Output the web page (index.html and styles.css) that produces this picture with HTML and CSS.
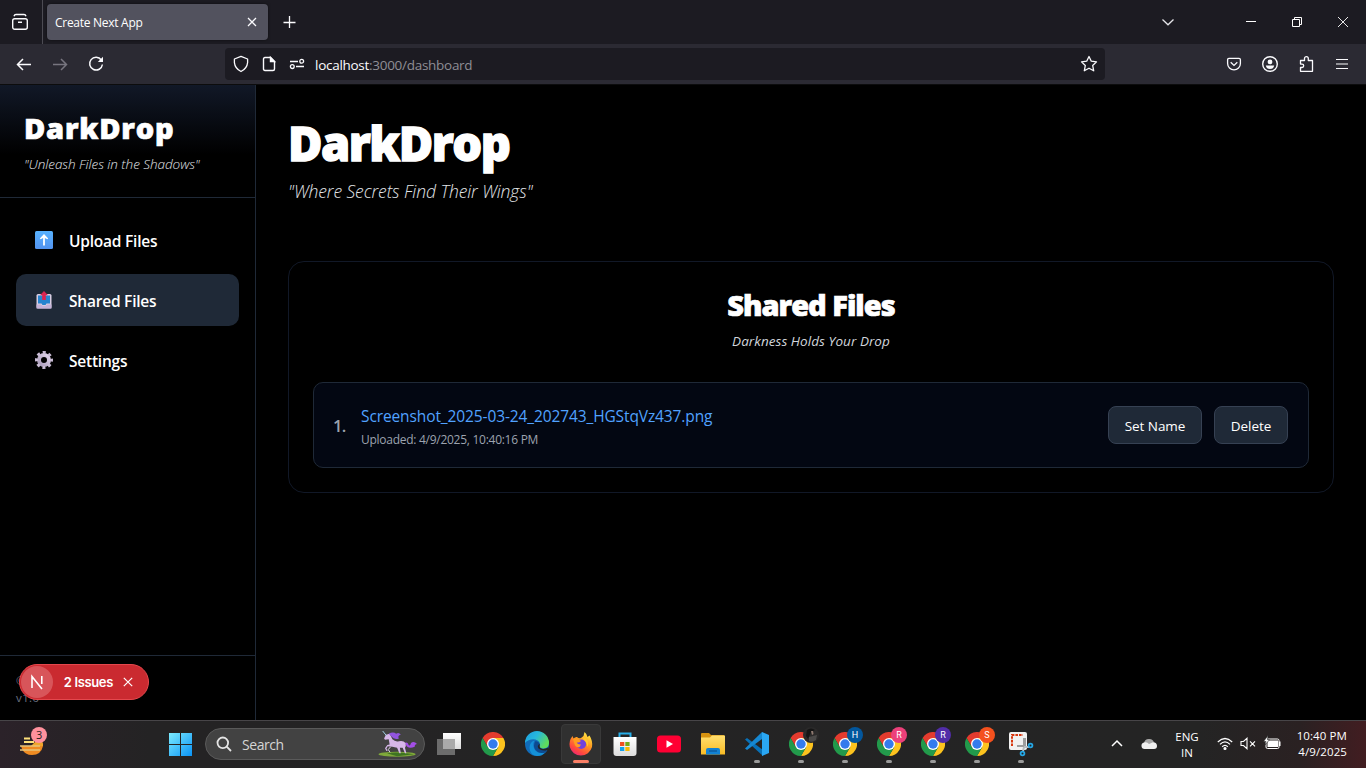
FILE: index.html
```html
<!DOCTYPE html>
<html lang="en">
<head>
<meta charset="utf-8">
<title>Create Next App</title>
<link rel="stylesheet" href="styles.css">
</head>
<body>
<svg width="0" height="0" class="defs">
  <defs>
    <linearGradient id="gw" x1="0" y1="0" x2="1" y2="1"><stop offset="0" stop-color="#7cebff"/><stop offset="1" stop-color="#0a93f5"/></linearGradient>
    <linearGradient id="ge" x1="0" y1="0" x2="1" y2=".5"><stop offset="0" stop-color="#1b9de2"/><stop offset=".5" stop-color="#27b8dc"/><stop offset="1" stop-color="#5fdc5b"/></linearGradient>
    <linearGradient id="gf" x1=".8" y1="0" x2=".2" y2="1"><stop offset="0" stop-color="#fff04a"/><stop offset=".4" stop-color="#ff9a1f"/><stop offset=".75" stop-color="#ff4a3e"/><stop offset="1" stop-color="#e8207a"/></linearGradient>
    <linearGradient id="gs" x1="0" y1="0" x2="0" y2="1"><stop offset="0" stop-color="#ffffff"/><stop offset="1" stop-color="#dcdcdc"/></linearGradient>
    <linearGradient id="gd" x1="0" y1="0" x2="0" y2="1"><stop offset="0" stop-color="#ffdf70"/><stop offset="1" stop-color="#f9bb24"/></linearGradient>
    <linearGradient id="gu" x1="0" y1="0" x2="0" y2="1"><stop offset="0" stop-color="#58b2ff"/><stop offset="1" stop-color="#5292ee"/></linearGradient>
    <linearGradient id="gg" x1="1" y1="0" x2="0" y2="1"><stop offset="0" stop-color="#e2d5ec"/><stop offset="1" stop-color="#a99bb9"/></linearGradient>
    <symbol id="chrome" viewBox="0 0 24 24">
      <path fill="#e33b2e" d="M12 6H22.4A12 12 0 0 0 1.6 6L6.8 15L12 12Z"/>
      <path fill="#fcc31e" d="M22.4 6A12 12 0 0 1 12 24L17.2 15L12 12V6Z"/>
      <path fill="#229a4b" d="M12 24A12 12 0 0 1 1.6 6L6.8 15L12 12L17.2 15Z"/>
      <circle cx="12" cy="12" r="6" fill="#fff"/><circle cx="12" cy="12" r="4.7" fill="#347bed"/>
    </symbol>
  </defs>
</svg>
<div class="screen">
  <header class="tabstrip">
    <div class="recent"><svg width="18" height="18" viewBox="0 0 18 18" fill="none" stroke="#fbfbfe" stroke-width="1.4"><rect x="1.7" y="5.7" width="14.6" height="10.6" rx="2"/><path d="M3 3.3Q3.5 1.5 5 1.5H13Q14.500 1.500 15 3.300M7 9.300H11"/></svg></div>
    <div class="tab"><span class="tab-title">Create Next App</span><svg width="10" height="10" viewBox="0 0 10 10" stroke="#fbfbfe" stroke-width="1.300"><path d="M1 1L9 9M9 1L1 9"/></svg></div>
    <svg class="plus" width="14" height="14" viewBox="0 0 14 14" stroke="#fbfbfe" stroke-width="1.300"><path d="M6.500 1V13M.5 7.500H12.500"/></svg>
    <div class="window-controls">
      <svg width="14" height="14" viewBox="0 0 14 14" fill="none" stroke="#e4e4e8" stroke-width="1.300"><path d="M1.500 4.500L7 9.800L12.500 4.500"/></svg>
      <svg width="12" height="12" viewBox="0 0 12 12" stroke="#fff"><path d="M1 5.500H11"/></svg>
      <svg width="12" height="12" viewBox="0 0 12 12" fill="none" stroke="#fff"><path d="M1.500 3.500H8.500V10.500H1.500ZM3.500 3.500V1.500H10.500V8.500H8.500"/></svg>
      <svg width="12" height="12" viewBox="0 0 12 12" stroke="#fff" stroke-width=".9"><path d="M1 1L11 11M11 1L1 11"/></svg>
    </div>
  </header>
  <div class="toolbar">
    <div class="nav-buttons">
      <svg width="16" height="16" viewBox="0 0 16 16" fill="none" stroke="#fbfbfe" stroke-width="1.500"><path d="M15 8.500H1.500M7 3L1.500 8.500L7 14"/></svg>
      <svg width="16" height="16" viewBox="0 0 16 16" fill="none" stroke="#77757f" stroke-width="1.500"><path d="M1 8.500H14.500M9 3L14.500 8.500L9 14"/></svg>
      <svg width="16" height="16" viewBox="0 0 16 16" fill="none" stroke="#fbfbfe" stroke-width="1.500"><path d="M13.300 4A6.400 6.400 0 1 0 14.400 8.500"/><path d="M15 .8V6H9.800Z" fill="#fbfbfe" stroke="none"/></svg>
    </div>
    <div class="urlbar">
      <svg width="16" height="18" viewBox="0 0 16 18" fill="none" stroke="#fbfbfe" stroke-width="1.300"><path d="M8 1.300L14.600 4V7.600Q14 13.500 8 16.500Q2 13.500 1.400 7.600V4Z" stroke-linejoin="round"/></svg>
      <svg width="14" height="16" viewBox="0 0 14 16" fill="none" stroke="#fbfbfe" stroke-width="1.400"><path d="M3 1.500H8.500L12.500 5.500V13Q12.500 14.500 11 14.500H3Q1.500 14.500 1.500 13V3Q1.500 1.500 3 1.500Z"/><path d="M8.500 1.500V5.500H12.500Z" fill="#fbfbfe"/></svg>
      <svg width="16" height="14" viewBox="0 0 16 14" fill="none" stroke="#fbfbfe" stroke-width="1.300"><path d="M1 4.500H9M7 9.500H15"/><circle cx="12.700" cy="4.300" r="1.900"/><circle cx="3.300" cy="9.600" r="1.900"/></svg>
      <span class="url"><b>localhost</b>:3000/dashboard</span>
      <svg width="18" height="18" viewBox="0 0 18 18" fill="none" stroke="#fbfbfe" stroke-width="1.300" stroke-linejoin="round"><path d="M9 1.500L11.300 6.200L16.500 6.900L12.700 10.500L13.700 15.800L9 13.200L4.300 15.800L5.300 10.500L1.500 6.900L6.700 6.200Z"/></svg>
    </div>
    <div class="tools">
      <svg width="16" height="16" viewBox="0 0 16 16" fill="none" stroke="#fbfbfe" stroke-width="1.300"><path d="M3 2.300H13Q14.400 2.300 14.400 3.700V7.500A6.400 6.400 0 0 1 1.600 7.500V3.700Q1.600 2.300 3 2.300Z"/><path d="M4.700 6.300L8 9.400L11.300 6.300"/></svg>
      <svg width="18" height="18" viewBox="0 0 18 18"><circle cx="9" cy="9" r="7.300" fill="none" stroke="#fbfbfe" stroke-width="1.400"/><circle cx="9" cy="6.900" r="2.400" fill="#fbfbfe"/><path d="M4.800 10.500H13.200Q12.500 14 9 14Q5.500 14 4.800 10.500Z" fill="#fbfbfe"/></svg>
      <svg width="18" height="18" viewBox="0 0 18 18" fill="none" stroke="#fbfbfe" stroke-width="1.300" stroke-linejoin="round"><path d="M2.500 8.500V5.500H6.500V3.500A1.900 1.900 0 0 1 10.300 3.500V5.500H14.500V16.300H2.500V12.500H4A1.700 1.700 0 0 0 4 9.100H2.500Z"/></svg>
      <svg width="14" height="14" viewBox="0 0 14 14" stroke="#fbfbfe" stroke-width="1.200"><path d="M1 2.500H13M1 7H13M1 11.500H13"/></svg>
    </div>
  </div>
  <div class="app">
    <aside class="sidebar">
      <div class="brand"><h2 class="brand-name">DarkDrop</h2><p class="brand-tag">"Unleash Files in the Shadows"</p></div>
      <nav class="menu">
        <a class="menu-item"><svg width="18" height="18" viewBox="0 0 18 18"><rect width="18" height="18" rx="1.500" fill="url(#gu)"/><path d="M9 3L13.200 7.500L12.300 8.300L9.900 7V14.500H8.100V7L5.700 8.300L4.800 7.500Z" fill="#fff"/></svg><span>Upload Files</span></a>
        <a class="menu-item active"><svg width="18" height="18" viewBox="0 0 18 18"><rect x="1.500" y="3" width="15" height="14.500" rx="1.500" fill="#d8cde2"/><path d="M3 4.500H15V12.500H11.500L10.500 14H7.500L6.500 12.500H3Z" fill="#2684cf"/><path d="M1.500 13.500H6L7.500 15H10.500L12 13.500H16.500V17.500H1.500Z" fill="#c5b3d8"/><path d="M9 0L13 4.300H10.800V9H7.200V4.300H5Z" fill="#dc2450"/></svg><span>Shared Files</span></a>
        <a class="menu-item"><svg width="18" height="18" viewBox="0 0 18 18" fill="none"><circle cx="9" cy="9" r="5" stroke="url(#gg)" stroke-width="4"/><circle cx="9" cy="9" r="7.500" stroke="#c9bcd5" stroke-width="3" stroke-dasharray="3 2.890" stroke-dashoffset="1.500"/></svg><span>Settings</span></a>
      </nav>
      <div class="side-foot"><p>© 2025</p><p>v1.0</p></div>
      <div class="issues">
        <span class="next-mark"><svg width="16" height="16" viewBox="0 0 16 16" fill="none" stroke="#fff" stroke-width="1.600"><path d="M3 14V2.500L13 15"/><path d="M12.800 2V10"/></svg></span>
        <span class="issues-text">2 Issues</span>
        <svg width="10" height="10" viewBox="0 0 10 10" stroke="#fff" stroke-width="1.200"><path d="M.8.8L9.200 9.200M9.200.8L.8 9.200"/></svg>
      </div>
    </aside>
    <main class="main">
      <h1 class="title">DarkDrop</h1>
      <p class="subtitle">"Where Secrets Find Their Wings"</p>
      <section class="card">
        <h2 class="card-title">Shared Files</h2>
        <p class="card-sub">Darkness Holds Your Drop</p>
        <div class="file">
          <span class="num">1.</span>
          <div class="info"><a class="file-name">Screenshot_2025-03-24_202743_HGStqVz437.png</a><span class="date">Uploaded: 4/9/2025, 10:40:16 PM</span></div>
          <button class="btn set">Set Name</button><button class="btn del">Delete</button>
        </div>
      </section>
    </main>
  </div>
  <footer class="taskbar">
    <div class="widget"><svg width="30" height="32" viewBox="0 0 30 32"><path d="M4 19H26Q24 28 15 28Q8 28 5 22Z" fill="#ef8b22"/><path d="M21 12Q27 14 26 19H14Z" fill="#efa52b"/><path d="M7 11.500H13M7 15H17" stroke="#ffe27a" stroke-width="2"/><path d="M3 19H23M3 23H23" stroke="#e8c378" stroke-width="1.700"/><circle cx="22" cy="8" r="8" fill="#ff919d"/></svg><span class="count">3</span></div>
    <svg class="start" width="24" height="24" viewBox="0 0 24 24" fill="url(#gw)"><path d="M1 1H12V12H1ZM13 1H24V12H13ZM1 13H12V24H1ZM13 13H24V24H13Z"/></svg>
    <div class="search">
      <svg width="16" height="16" viewBox="0 0 16 16" fill="none" stroke="#e4e4e4" stroke-width="1.800"><circle cx="6.800" cy="6.800" r="5.300"/><path d="M10.700 10.700L15 15"/></svg>
      <span>Search</span>
      <svg width="42" height="26" viewBox="0 0 42 28"><ellipse cx="20" cy="25" rx="20" ry="2.600" fill="#7fa83a"/><path d="M9 24Q20 22 38 25L20 27.300Z" fill="#3e7422"/><path d="M28 13Q31 11 32.500 15Q34 17 35 13Q38 10 41.500 14Q39 14 39 17Q34 19 31 17Z" fill="#a34ee6"/><path d="M6 8L8 4L12 3L15 9Q18 12 22 11Q27 10 29 13Q30 16 28.500 18L30 24H28.500L26 18L23 18L24 24H22.500L20 18L15 17L10 16.500L8.500 19L10 21L8.500 21.500L7 18.500L9.500 15L12 14.500L11 9L7 9.500Z" fill="#d6b7e8"/><path d="M11 3Q16 0 19 3Q22 1 24 4Q20 5 22 8Q17 10 14 6Z" fill="#9254df"/><path d="M4.500 0L8.500 5" stroke="#a9dcf2"/><path d="M13 17L10.500 20L12.500 23" stroke="#eee1f3" fill="none"/></svg>
    </div>
    <div class="apps">
      <div class="appi"><svg width="24" height="24" viewBox="0 0 24 24"><rect x="6" y="1" width="18" height="16" fill="url(#gs)"/><rect y="7" width="18" height="16" fill="#6c6c6c"/><rect x="6" y="7" width="12" height="10" fill="#aaa"/></svg></div>
      <div class="appi"><svg width="24" height="24"><use href="#chrome"/></svg></div>
      <div class="appi"><svg width="24" height="24" viewBox="0 0 24 24"><circle cx="12" cy="12" r="12" fill="#116cba"/><path d="M0 11A12 12 0 0 1 24 11Q24 16 18.500 16.500Q13.500 16.500 15 13.500Q15.500 9 10.500 7.500Q4 6.500 0 11Z" fill="url(#ge)"/><path d="M9.500 8.500Q7 13 10 18Q13.500 22.500 20 20.500Q17 24 12 24Q5 23 4.500 16Q4.500 10 9.500 8.500Z" fill="#1491d8"/><path d="M10.500 9Q15 10 14.500 13Q13 16 16 17.500Q19.500 18.500 22.500 17Q21.500 19.300 20 20.500Q14 22.500 10.500 18Q7.500 13.500 10.500 9Z" fill="#0d4b91"/><path d="M15 12Q13.500 15.500 17 16.800Q20 17.500 23 15.500L24 18H22.500Q17 19.500 13.500 16.500Q11.500 13.500 15 12Z" fill="#242424"/></svg></div>
      <div class="appi focused"><svg width="24" height="24" viewBox="0 0 24 24"><path d="M14.500 4L15.500 0Q18 2 18.500 5L20.500 3.500Q24 9 23 15A11.500 11.500 0 0 1 .8 15Q-.5 9 3.500 4L4.500 6.500Q6.500 4.500 8 5Q10 7 12 6Z" fill="url(#gf)"/><circle cx="12.300" cy="12.200" r="4.800" fill="#7142dc"/><path d="M4 7Q8 5 12 9Q10 11 7.500 10.500Q9 13 12 12.500L10.500 15Q7 16 5.500 12Z" fill="#ff9c20"/><path d="M14.500 5Q21 8 18.500 15Q17.500 9 14.500 8Z" fill="#ffc72e"/></svg></div>
      <div class="appi"><svg width="24" height="24" viewBox="0 0 24 24"><path d="M6.500 5.500V1.500H17.500V5.500" fill="none" stroke="#27aee8" stroke-width="2"/><path d="M.5 5H23.500V21Q23.500 24 20.500 24H3.500Q.5 24 .5 21Z" fill="url(#gs)"/><path d="M7 10H11.300V14H7Z" fill="#f05022"/><path d="M12.300 10H16.600V14H12.300Z" fill="#74aa18"/><path d="M7 15H11.300V19H7Z" fill="#13a1ec"/><path d="M12.300 15H16.600V19H12.300Z" fill="#fab900"/></svg></div>
      <div class="appi"><svg width="24" height="24" viewBox="0 0 24 24"><rect y="3.500" width="24" height="17" rx="3.500" fill="#ff0033"/><path d="M9.500 8.300L16 12L9.500 15.700Z" fill="#fff"/></svg></div>
      <div class="appi"><svg width="24" height="24" viewBox="0 0 24 24"><path d="M0 2Q0 1 1 1H8L10 3H23V9H0Z" fill="#d69210"/><path d="M0 5.500H9L11 3.500H24V22.500H0Z" fill="url(#gd)"/><path d="M5 22.500V18Q5 16 7 16H17Q19 16 19 18V22.500Z" fill="#1181d3"/><path d="M8 19H16" stroke="#0c5b9f" stroke-width="1.500"/></svg></div>
      <div class="appi open"><svg width="24" height="24" viewBox="0 0 24 24"><path d="M0 7.500L2 6L18 18V24Z" fill="#0871b8"/><path d="M17 0V7L2 18L0 16.500Z" fill="#1688d2"/><path d="M17 0L24 3V21L17 24Z" fill="#2aa7f3"/></svg></div>
      <div class="appi open"><svg width="24" height="24"><use href="#chrome"/></svg><svg class="badge" width="16" height="16" viewBox="0 0 16 16"><circle cx="8" cy="8" r="8" fill="#2b2a2a"/><path d="M4 3Q8 0 12 3L8 5L5 12L3 9Z" fill="#151515"/><path d="M8 4L10 4L10.500 7L9 8Z" fill="#8f7a70"/><path d="M6 10L14 8L13 13Q9 16 6 14Z" fill="#4b4a49"/></svg></div>
      <div class="appi open"><svg width="24" height="24"><use href="#chrome"/></svg><span class="badge blue">H</span></div>
      <div class="appi open"><svg width="24" height="24"><use href="#chrome"/></svg><span class="badge pink">R</span></div>
      <div class="appi open"><svg width="24" height="24"><use href="#chrome"/></svg><span class="badge purple">R</span></div>
      <div class="appi open"><svg width="24" height="24"><use href="#chrome"/></svg><span class="badge orange">S</span></div>
      <div class="appi open"><svg width="24" height="24" viewBox="0 0 24 24"><rect width="18" height="18" rx="2" fill="#f1f1f1"/><path d="M3 14V3H14" fill="none" stroke="#d8370e" stroke-width="2" stroke-dasharray="2.600 1"/><path d="M14 6H17V15H8V13H14Z" fill="#9d9d9d"/><path d="M15 15L20 15M15 15L14 19" stroke="#b8bdc0" stroke-width="2"/><g fill="none" stroke="#25a7e5" stroke-width="1.800"><circle cx="21.500" cy="13.500" r="1.900"/><circle cx="13.500" cy="21.500" r="1.900"/></g></svg></div>
    </div>
    <div class="tray">
      <svg width="12" height="12" viewBox="0 0 12 12" fill="none" stroke="#fff" stroke-width="1.500"><path d="M1 8L6 3L11 8"/></svg>
      <svg class="cloud" width="16" height="12" viewBox="0 0 16 12"><path d="M3 5Q4 .5 8.500 1Q12 1 13 4.500L8 7Z" fill="#a7a7a7"/><path d="M3.500 11A3.300 3.300 0 0 1 3 4.500Q6 3.500 8 6L12 4.300Q16 4.500 16 8Q16 11 13 11Z" fill="#f0f0f0"/></svg>
      <div class="lang">ENG<br>IN</div>
      <svg class="wifi" width="16" height="14" viewBox="0 0 16 14" fill="none" stroke="#fff" stroke-width="1.200"><path d="M.8 5Q8-2 15.200 5M3 7.400Q8 2.400 13 7.400M5.200 9.700Q8 7 10.800 9.700"/><circle cx="8" cy="11.500" r="1" fill="#fff"/></svg>
      <svg class="vol" width="16" height="14" viewBox="0 0 16 14" fill="none" stroke="#fff" stroke-width="1.100"><path d="M1 4.500H3.500L7 1.300V11.700L3.500 8.500H1ZM10 4.300L15 9.300M15 4.300L10 9.300"/></svg>
      <svg class="batt" width="18" height="14" viewBox="0 0 18 14"><rect x="2" y="2" width="13" height="9.500" rx="1.500" fill="none" stroke="#fff"/><rect x="3.500" y="3.500" width="10.500" height="6.500" fill="#fff"/><path d="M15 4.500H16.500V9H15Z" fill="#fff"/><path d="M4-1.500L-.5 4.500H2L1 8L5.500 2.700H3.500Z" fill="#fff" stroke="#242424" stroke-width=".6"/></svg>
      <div class="clock">10:40 PM<br>4/9/2025</div>
    </div>
  </footer>
</div>
</body>
</html>
```
FILE: styles.css
```css
* { box-sizing: border-box; }
body { margin: 0; background: #000; font-family: "Open Sans", "Noto Sans", sans-serif; color: #fff; }
h1, h2, p { margin: 0; white-space: nowrap; }
svg { display: block; flex: none; overflow: visible; }
.defs { position: absolute; }
.screen { width: 1366px; height: 768px; display: flex; flex-direction: column; overflow: hidden; }
.tabstrip { height: 44px; flex: none; display: flex; align-items: center; background: #1c1b22; }
.recent { width: 43px; height: 44px; padding: 13px 0 0 11px; border-right: 1px solid #4c4b53; }
.tab { width: 221px; height: 36px; margin-left: 4px; padding: 0 11px 0 8px; border-radius: 4px; background: #52525e; display: flex; align-items: center; justify-content: space-between; box-shadow: 0 0 3px #0008; }
.tab-title { padding-top: 1px; font-size: 12px; letter-spacing: -.28px; }
.plus { margin-left: 15px; }
.window-controls { margin-left: auto; padding-right: 17px; display: flex; align-items: center; }
.window-controls svg:nth-child(1) { margin-right: 70px; }
.window-controls svg:nth-child(2), .window-controls svg:nth-child(3) { margin-right: 34px; }
.toolbar { height: 41px; flex: none; padding-bottom: 1px; background: #2b2a33; border-bottom: 1px solid #0c0c0d; display: flex; align-items: center; }
.nav-buttons { width: 225px; padding-left: 16px; display: flex; gap: 20px; }
.urlbar { width: 880px; height: 32px; padding: 0 7px 0 8px; border-radius: 4px; background: #1c1b22; display: flex; align-items: center; }
.urlbar svg:nth-child(2) { margin-left: 13px; }
.urlbar svg:nth-child(3) { margin-left: 13px; }
.url { margin: 2px auto 0 10px; color: #8f8e95; font-size: 13.500px; letter-spacing: -.28px; }
.url b { color: #fbfbfe; font-weight: 400; }
.tools { margin-left: auto; padding-right: 17px; display: flex; align-items: center; gap: 19px; }
.app { height: 635px; flex: none; display: flex; background: #000; }
.sidebar { position: relative; width: 256px; flex: none; border-right: 1px solid #1f2937; display: flex; flex-direction: column; }
.brand { height: 113px; padding: 23px 24px; border-bottom: 1px solid #1f2937; background: linear-gradient(#111827, #000 62%); }
.brand-name { font-size: 29px; line-height: 40px; font-weight: 800; letter-spacing: .8px; -webkit-text-stroke: .7px #fff; }
.brand-tag { margin-top: 6px; font-size: 13.500px; line-height: 20px; font-style: italic; font-weight: 300; color: #e2e5e9; letter-spacing: -.05px; }
.menu { flex: 1; padding: 16px; display: flex; flex-direction: column; gap: 8px; }
.menu-item { height: 52px; border-radius: 10px; padding-left: 19px; display: flex; align-items: center; gap: 16px; font-size: 15.500px; font-weight: 600; white-space: nowrap; }
.menu-item span { padding-top: 2px; letter-spacing: -.22px; }
.menu-item.active { background: #1f2937; }
.side-foot { height: 65px; border-top: 1px solid #1f2937; padding: 16px; font-size: 11.500px; line-height: 17px; letter-spacing: .4px; color: #6b7280; }
.issues { position: absolute; left: 19px; top: 579px; width: 130px; height: 36px; padding: 0 15px 0 1px; border: 1px solid #e5484d; border-radius: 18px; background: #ca2a30; display: flex; align-items: center; }
.next-mark { width: 32px; height: 32px; border-radius: 50%; background: #d8555a; display: grid; place-items: center; }
.issues-text { margin: 0 10px 0 11px; flex: 1; font: 600 13px Inter, sans-serif; letter-spacing: -.35px; white-space: nowrap; }
.main { flex: 1; padding: 32px; }
.title { margin-top: -2px; font-size: 47px; line-height: 56px; font-weight: 800; letter-spacing: -1.500px; -webkit-text-stroke: 1.300px #fff; }
.subtitle { margin-top: 6px; font-size: 17.500px; line-height: 28px; font-style: italic; font-weight: 300; color: #e2e5e9; letter-spacing: -.08px; }
.card { width: 1046px; height: 232px; margin-top: 56px; padding: 23px 24px; border: 1px solid #111827; border-radius: 16px; text-align: center; }
.card-title { font-size: 29px; line-height: 40px; font-weight: 800; letter-spacing: -1px; -webkit-text-stroke: .7px #fff; }
.card-sub { margin-top: 6px; font-size: 13.500px; line-height: 20px; font-style: italic; color: #d1d5db; letter-spacing: .06px; }
.file { height: 86px; margin-top: 31px; padding: 0 20px 0 19px; border: 1px solid #1f2937; border-radius: 10px; background: #030712; display: flex; align-items: center; text-align: left; }
.num { width: 28px; font-size: 16.500px; font-weight: 600; color: #9ca3af; letter-spacing: -.8px; }
.info { flex: 1; display: flex; flex-direction: column; padding-top: 1px; }
.file-name { color: #51a2ff; font-size: 15.500px; line-height: 24px; letter-spacing: -.11px; }
.date { color: #9ca3af; font-size: 12px; line-height: 16px; margin-top: 4px; letter-spacing: -.27px; }
.btn { height: 38px; margin: 0; padding: 2px 0 0; border: 1px solid #364153; border-radius: 8px; background: #1f2937; color: #fff; font: 400 13.500px "Open Sans", sans-serif; letter-spacing: -.05px; }
.set { width: 94px; margin-right: 12px; }
.del { width: 74px; }
.taskbar { height: 48px; flex: none; border-top: 1px solid #474548; background: linear-gradient(90deg, #2b2229 0, #242324 150px, #242424 1200px, #2a2122 1300px, #421d21 1366px); display: flex; align-items: center; padding-bottom: 1px; }
.widget { position: relative; width: 168px; height: 47px; padding: 6px 0 0 17px; }
.count { position: absolute; left: 36px; top: 7px; color: #222; font-size: 11px; line-height: 14px; }
.start { margin-right: 13px; }
.search { width: 220px; height: 32px; padding: 0 5px 0 10px; border: 1px solid #5a5a5a; border-radius: 16px; background: #424242; display: flex; align-items: center; font-size: 14px; color: #d5d5d5; }
.search span { margin: 0 auto 0 10px; letter-spacing: -.45px; }
.apps { margin-left: 2px; display: flex; }
.appi { position: relative; width: 44px; height: 47px; display: grid; place-items: center; }
.appi > svg:first-child { position: relative; }
.focused::before { content: ""; position: absolute; inset: 3px 2px 4px; border: 1px solid #393939; border-radius: 4px; background: #303030; }
.focused::after { content: ""; position: absolute; left: 14px; bottom: 5px; width: 16px; height: 3px; border-radius: 2px; background: #fb7f66; }
.open::after { content: ""; position: absolute; left: 19px; bottom: 5px; width: 6px; height: 3px; border-radius: 2px; background: #9a9a9a; }
.badge { position: absolute; left: 24px; top: 6px; width: 16px; height: 16px; border-radius: 50%; font: 9px/16px Roboto, sans-serif; text-align: center; }
.blue { background: #03579d; }
.pink { background: #ec407a; }
.purple { background: #512da8; }
.orange { background: #f4511e; }
.tray { flex: 1; padding: 0 19px 0 68px; display: flex; align-items: center; font-size: 11.500px; line-height: 16px; }
.cloud { margin-left: 18px; }
.lang { width: 26px; margin-left: 17px; padding-top: 1px; text-align: center; letter-spacing: -.05px; }
.wifi { margin-left: 17px; }
.vol { margin-left: 7px; }
.batt { margin-left: 8px; }
.clock { margin-left: auto; text-align: right; white-space: nowrap; letter-spacing: .1px; }
```
